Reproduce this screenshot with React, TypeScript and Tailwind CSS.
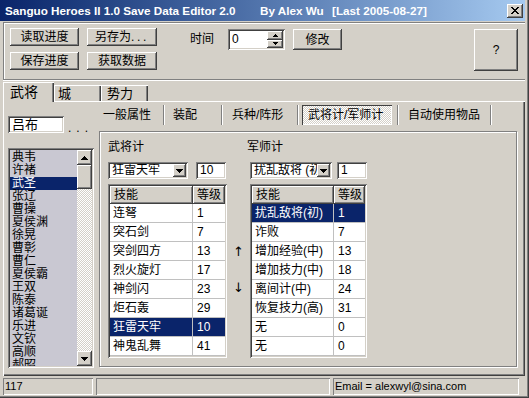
import type { ReactNode } from 'react'

const RAISED = 'shadow-[inset_-1px_-1px_0_#404040,inset_1px_1px_0_#fff,inset_-2px_-2px_0_#808080]'
const SUNKEN = 'shadow-[inset_1px_1px_0_#808080,inset_-1px_-1px_0_#fff,inset_2px_2px_0_#404040,inset_-2px_-2px_0_#d4d0c8]'
const THIN_SUNKEN = 'shadow-[inset_1px_1px_0_#808080,inset_-1px_-1px_0_#fff]'
const DITHER = 'bg-[image:repeating-conic-gradient(#fff_0_25%,#d4d0c8_0_50%)] bg-[length:2px_2px]'

const generals = ['典韦', '许褚', '武圣', '张辽', '曹操', '夏侯渊', '徐晃', '曹彰', '曹仁', '夏侯霸', '王双', '陈泰', '诸葛诞', '乐进', '文钦', '高顺', '郝昭']

const skills = [
  ['连弩', '1'], ['突石剑', '7'], ['突剑四方', '13'], ['烈火旋灯', '17'],
  ['神剑闪', '23'], ['炬石轰', '29'], ['狂雷天牢', '10'], ['神鬼乱舞', '41'],
]

const tactics = [
  ['扰乱敌将(初)', '1'], ['诈败', '7'], ['增加经验(中)', '13'], ['增加技力(中)', '18'],
  ['离间计(中)', '24'], ['恢复技力(高)', '31'], ['无', '0'], ['无', '0'],
]

function Tri({ up = false, small = false }: { up?: boolean; small?: boolean }) {
  // pixel triangle, drawn row by row
  const rows = small ? [5, 3, 1] : [7, 5, 3, 1]
  const w = rows[0]
  const list = up ? [...rows].reverse() : rows
  return (
    <svg width={w} height={rows.length} viewBox={`0 0 ${w} ${rows.length}`} shapeRendering="crispEdges">
      {list.map((n, i) => (
        <rect key={i} x={(w - n) / 2} y={i} width={n} height={1} fill="#000" />
      ))}
    </svg>
  )
}

function CloseGlyph() {
  const rows = ['11000011', '01100110', '00111100', '00011000', '00111100', '01100110', '11000011']
  return (
    <svg width="8" height="7" viewBox="0 0 8 7" shapeRendering="crispEdges">
      {rows.flatMap((r, y) =>
        r.split('').map((c, x) => (c === '1' ? <rect key={`${x}-${y}`} x={x} y={y} width={1} height={1} fill="#000" /> : null)),
      )}
    </svg>
  )
}

function Btn({ children, className = '' }: { children: ReactNode; className?: string }) {
  return (
    <div className={`flex items-center justify-center bg-[#d4d0c8] text-[12px] leading-none ${RAISED} ${className}`}>
      {children}
    </div>
  )
}

function Combo({ text, className = '' }: { text: string; className?: string }) {
  return (
    <div className={`flex h-[17px] bg-white p-[2px] ${SUNKEN} ${className}`}>
      <div className="min-w-0 flex-1 overflow-hidden whitespace-nowrap pl-[2px] text-[12px] leading-[13px]">{text}</div>
      <div className={`flex w-[13px] items-center justify-center bg-[#d4d0c8] ${RAISED}`}>
        <Tri />
      </div>
    </div>
  )
}

function Edit({ text, className = '' }: { text: string; className?: string }) {
  return (
    <div className={`h-[17px] bg-white pl-[4px] pt-[2px] text-[12px] leading-[13px] ${SUNKEN} ${className}`}>{text}</div>
  )
}

function Table({ rows, sel, className, col }: { rows: string[][]; sel: number; className: string; col: string }) {
  return (
    <div className={`mt-[5px] h-[174px] bg-white p-[2px] ${SUNKEN} ${className}`}>
      <div className="flex h-[18px] text-[12px] leading-[18px]">
        <div className={`bg-[#d4d0c8] pl-[4px] ${RAISED} ${col}`}>技能</div>
        <div className={`flex-1 bg-[#d4d0c8] pl-[4px] ${RAISED}`}>等级</div>
      </div>
      {rows.map(([name, lv], i) => (
        <div
          key={i}
          className={`flex h-[19px] border-b border-[#c0c0c0] text-[12px] leading-[18px] ${i === sel ? 'bg-[#0a246a] text-white' : ''}`}
        >
          <div className={`overflow-hidden whitespace-nowrap border-r border-[#c0c0c0] pl-[3px] ${col}`}>{name}</div>
          <div className="flex-1 pl-[4px]">{lv}</div>
        </div>
      ))}
    </div>
  )
}

function Sep() {
  return <div className="h-[20px] w-[2px] shadow-[inset_1px_0_0_#808080,inset_-1px_0_0_#fff]" />
}

export default function App() {
  return (
    <div className="relative h-[398px] w-[529px] overflow-hidden bg-[#d4d0c8] text-black font-['Liberation_Sans','Noto_Sans_CJK_SC',sans-serif] shadow-[inset_-1px_-1px_0_#404040,inset_-2px_-2px_0_#808080]">
      {/* Title bar */}
      <div className="flex h-[21px] w-[525px] items-center bg-gradient-to-r from-[#0a246a] to-[#a6caf0] text-[11.7px] font-bold text-white">
        <span className="ml-[5px] w-[255px] whitespace-nowrap">Sanguo Heroes II 1.0 Save Data Editor 2.0</span>
        <span className="w-[72px] whitespace-nowrap">By Alex Wu</span>
        <span className="whitespace-nowrap">[Last 2005-08-27]</span>
        <div className={`ml-auto mr-[2px] flex h-[14px] w-[16px] items-center justify-center bg-[#d4d0c8] ${RAISED}`}>
          <CloseGlyph />
        </div>
      </div>

      {/* Top group */}
      <div className="ml-[3px] mt-[1px] h-[58px] w-[522px] border border-r-0 border-[#808080] shadow-[inset_1px_1px_0_#fff,0_1px_0_#fff]">
        <div className="flex pl-[6px] pt-[5px]">
          <div className="grid grid-cols-[69px_70px] gap-x-[8px] gap-y-[4px]">
            <Btn className="h-[18px]">读取进度</Btn>
            <Btn className="h-[18px]">
              另存为<span className="tracking-[2.6px]">...</span>
            </Btn>
            <Btn className="h-[18px]">保存进度</Btn>
            <Btn className="h-[18px]">获取数据</Btn>
          </div>
          <span className="ml-[33px] mt-[4px] text-[12px] leading-[14px]">时间</span>
          <div className={`ml-[14px] mt-[1px] flex h-[21px] w-[57px] bg-white p-[2px] ${SUNKEN}`}>
            <div className="flex-1 pl-[2px] pt-[1px] text-[12px] leading-[14px]">0</div>
            <div className="flex w-[16px] flex-col">
              <div className={`flex flex-1 items-center justify-center bg-[#d4d0c8] ${RAISED}`}>
                <Tri up small />
              </div>
              <div className={`flex flex-1 items-center justify-center bg-[#d4d0c8] ${RAISED}`}>
                <Tri small />
              </div>
            </div>
          </div>
          <Btn className="ml-[8px] mt-[1px] h-[21px] w-[49px]">修改</Btn>
          <Btn className="ml-auto mr-[7px] mt-[1px] h-[42px] w-[44px] text-[11px]">?</Btn>
        </div>
      </div>

      {/* Main tabs */}
      <div className="mt-[2px] flex h-[19px] items-end pl-[3px] text-[13px]">
        <div className="relative z-10 mb-[-1px] h-[20px] w-[51px] bg-[#d4d0c8] pl-[7px] pt-[2px] text-[14px] leading-[16px] shadow-[inset_1px_1px_0_#fff,inset_-1px_0_0_#404040,inset_-2px_0_0_#808080]">
          武将
        </div>
        <div className="h-[16px] w-[47px] pl-[4px] pt-[1px] leading-[15px] shadow-[inset_1px_1px_0_#fff,inset_-1px_0_0_#404040,inset_-2px_0_0_#808080]">
          城
        </div>
        <div className="h-[16px] w-[47px] pl-[6px] pt-[1px] leading-[15px] shadow-[inset_1px_1px_0_#fff,inset_-1px_0_0_#404040,inset_-2px_0_0_#808080]">
          势力
        </div>
      </div>

      {/* Tab page */}
      <div className="ml-[3px] flex h-[275px] w-[522px] pl-[5px] shadow-[inset_1px_1px_0_#fff,inset_-1px_-1px_0_#404040,inset_-2px_-2px_0_#808080]">
        {/* General list */}
        <div className="w-[85px] pt-[15px]">
          <div className="flex items-end">
            <div className={`h-[17px] w-[57px] bg-white pl-[4px] pt-[2px] text-[13px] leading-[13px] ${SUNKEN}`}>吕布</div>
            <span className="ml-[4px] text-[12px] leading-[10px] tracking-[5px]">...</span>
          </div>
          <div className={`mt-[15px] flex h-[220px] w-[86px] bg-white p-[2px] ${SUNKEN}`}>
            <div className="w-[67px] overflow-hidden bg-[#c9c8d2] pt-[1px]">
              {generals.map((g, i) => (
                <div
                  key={g}
                  className={`h-[13px] whitespace-nowrap pl-[2px] text-[12px] leading-[13px] ${i === 2 ? 'bg-[#0a246a] text-white' : ''}`}
                >
                  {g}
                </div>
              ))}
            </div>
            <div className={`flex w-[15px] flex-col ${DITHER}`}>
              <div className={`flex h-[15px] items-center justify-center bg-[#d4d0c8] ${RAISED}`}>
                <Tri up />
              </div>
              <div className={`h-[24px] bg-[#d4d0c8] ${RAISED}`} />
              <div className="flex-1" />
              <div className={`flex h-[15px] items-center justify-center bg-[#d4d0c8] ${RAISED}`}>
                <Tri />
              </div>
            </div>
          </div>
        </div>

        {/* Inner tab control */}
        <div className="ml-[4px] pt-[4px]">
          <div className="flex h-[20px] items-center text-[12px] leading-[14px]">
            <div className="w-[66px] pl-[6px]">一般属性</div>
            <Sep />
            <div className="w-[56px] pl-[8px]">装配</div>
            <Sep />
            <div className="w-[74px] pl-[9px]">兵种/阵形</div>
            <Sep />
            <div className="w-[98px] pl-[3px]">
              <div className={`flex h-[20px] w-[90px] items-center pl-[6px] ${DITHER} shadow-[inset_1px_1px_0_#404040,inset_-1px_-1px_0_#fff]`}>
                武将计/军师计
              </div>
            </div>
            <Sep />
            <div className="w-[91px] pl-[9px]">自动使用物品</div>
            <Sep />
          </div>

          <div className="ml-[2px] mt-[6px] flex h-[236px] w-[418px] border border-[#808080] pl-[8px] pt-[8px] shadow-[inset_1px_1px_0_#fff,1px_1px_0_#fff]">
            {/* 武将计 */}
            <div className="w-[119px]">
              <div className="h-[14px] text-[12px] leading-[14px]">武将计</div>
              <div className="mt-[8px] flex">
                <Combo text="狂雷天牢" className="w-[80px]" />
                <Edit text="10" className="ml-[8px] w-[30px]" />
              </div>
              <Table rows={skills} sel={6} className="w-[119px]" col="w-[83px]" />
            </div>

            {/* arrows */}
            <div className="flex w-[23px] flex-col items-center pt-[104px] font-['DejaVu_Sans',sans-serif] text-[13px] leading-[16px]">
              <span>↑</span>
              <span className="mt-[20px]">↓</span>
            </div>

            {/* 军师计 */}
            <div className="w-[117px]">
              <div className="-ml-[3px] h-[14px] text-[12px] leading-[14px]">军师计</div>
              <div className="mt-[8px] flex">
                <Combo text="扰乱敌将 (初)" className="w-[82px]" />
                <Edit text="1" className="ml-[5px] w-[30px]" />
              </div>
              <Table rows={tactics} sel={0} className="w-[117px]" col="w-[82px]" />
            </div>
          </div>
        </div>
      </div>

      {/* Status bar */}
      <div className="ml-[3px] mt-[2px] flex h-[17px] gap-[3px] text-[11px] leading-[17px]">
        <div className={`w-[90px] pl-[2px] ${THIN_SUNKEN}`}>117</div>
        <div className={`w-[234px] ${THIN_SUNKEN}`} />
        <div className={`w-[186px] whitespace-pre pl-[2px] ${THIN_SUNKEN}`}>Email = alexwyl@sina.com</div>
      </div>
    </div>
  )
}
